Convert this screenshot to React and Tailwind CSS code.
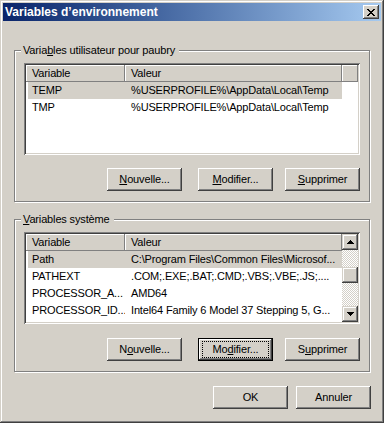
import React from "react";

const FONT = "font-['Liberation_Sans',Arial,sans-serif]";

function Btn({ children, className = "", focused = false }) {
  if (focused) {
    return (
      <div
        className={`flex h-[23px] w-[75px] shrink-0 border border-black bg-[#d4d0c8] px-[3px] py-[2px] shadow-[inset_-1px_-1px_#404040,inset_1px_1px_#fff,inset_-2px_-2px_#808080] ${className}`}
      >
        <div className="flex flex-1 items-center justify-center border border-dotted border-black leading-[13px]">
          {children}
        </div>
      </div>
    );
  }
  return (
    <div
      className={`flex h-[23px] w-[75px] shrink-0 items-center justify-center bg-[#d4d0c8] leading-[13px] shadow-[inset_-1px_-1px_#404040,inset_1px_1px_#fff,inset_-2px_-2px_#808080,inset_2px_2px_#d4d0c8] ${className}`}
    >
      {children}
    </div>
  );
}

function Arrow({ down = false }) {
  return (
    <svg
      width="7"
      height="4"
      viewBox="0 0 7 4"
      shapeRendering="crispEdges"
      className={down ? "rotate-180" : ""}
    >
      <path d="M3 0h1v1H3zM2 1h3v1H2zM1 2h5v1H1zM0 3h7v1H0z" fill="#000" />
    </svg>
  );
}

function ScrollBtn({ down = false }) {
  return (
    <div className="flex h-[16px] w-[16px] shrink-0 items-center justify-center bg-[#d4d0c8] shadow-[inset_-1px_-1px_#404040,inset_1px_1px_#d4d0c8,inset_-2px_-2px_#808080,inset_2px_2px_#fff]">
      <Arrow down={down} />
    </div>
  );
}

function Scrollbar() {
  return (
    <div className="flex w-[16px] shrink-0 flex-col">
      <ScrollBtn />
      <div className="flex-1 bg-[conic-gradient(#fff_25%,#d4d0c8_0_50%,#fff_0_75%,#d4d0c8_0)] bg-[length:2px_2px]">
        <div className="mt-[17px] h-[16px] w-[16px] bg-[#d4d0c8] shadow-[inset_-1px_-1px_#404040,inset_1px_1px_#d4d0c8,inset_-2px_-2px_#808080,inset_2px_2px_#fff]" />
      </div>
      <ScrollBtn down />
    </div>
  );
}

const HEAD =
  "flex h-full shrink-0 items-center bg-[#d4d0c8] shadow-[inset_-1px_-1px_#808080,inset_1px_1px_#fff]";

function ListView({ rows, scroll = false }) {
  return (
    <div className="ml-[9px] mt-[6px] flex h-[92px] w-[336px] bg-white p-[2px] shadow-[inset_1px_1px_#808080,inset_-1px_-1px_#fff,inset_2px_2px_#404040,inset_-2px_-2px_#d4d0c8]">
      <div className="flex min-w-0 flex-1 flex-col overflow-hidden">
        <div className="flex h-[17px] shrink-0">
          <div className={`${HEAD} w-[99px] pl-[6px]`}>Variable</div>
          <div className={`${HEAD} w-[217px] pl-[6px]`}>Valeur</div>
          <div className={`${HEAD} flex-1`} />
        </div>
        {rows.map((r) => (
          <div key={r.name} className="flex h-[17px] shrink-0">
            <div
              className={`ml-[2px] flex h-full leading-[17px] ${
                r.sel ? "bg-[#d4d0c8]" : ""
              }`}
            >
              <div className="w-[97px] shrink-0 overflow-hidden whitespace-nowrap pl-[4px]">
                {r.name}
              </div>
              <div className="w-[217px] shrink-0 overflow-hidden whitespace-nowrap pl-[6px]">
                {r.value}
              </div>
            </div>
          </div>
        ))}
      </div>
      {scroll && <Scrollbar />}
    </div>
  );
}

function GroupBox({ label, className = "", children }) {
  return (
    <div
      className={`flex w-[356px] flex-col border border-[#808080] pb-[10px] shadow-[inset_1px_1px_#fff,1px_1px_#fff] ${className}`}
    >
      <div className="-mt-[7px] ml-[6px] h-[13px] w-fit bg-[#d4d0c8] pl-[2px] pr-[4px] leading-[13px]">
        {label}
      </div>
      {children}
    </div>
  );
}

export default function App() {
  const userRows = [
    { name: "TEMP", value: "%USERPROFILE%\\AppData\\Local\\Temp", sel: true },
    { name: "TMP", value: "%USERPROFILE%\\AppData\\Local\\Temp" },
  ];
  const sysRows = [
    {
      name: "Path",
      value: "C:\\Program Files\\Common Files\\Microsof...",
      sel: true,
    },
    { name: "PATHEXT", value: ".COM;.EXE;.BAT;.CMD;.VBS;.VBE;.JS;...." },
    { name: "PROCESSOR_A...", value: "AMD64" },
    {
      name: "PROCESSOR_ID...",
      value: "Intel64 Family 6 Model 37 Stepping 5, G...",
    },
  ];

  return (
    <div
      className={`${FONT} h-[423px] w-[384px] overflow-hidden bg-[#d4d0c8] p-[3px] text-[11px] tracking-[-0.15px] text-black shadow-[inset_-1px_-1px_#404040,inset_1px_1px_#d4d0c8,inset_-2px_-2px_#808080,inset_2px_2px_#fff]`}
    >
      {/* Title bar */}
      <div className="flex h-[18px] items-center bg-gradient-to-r from-[#0a246a] to-[#a6caf0] pl-[2px] pr-[2px]">
        <div className="flex-1 text-[12px] font-bold tracking-normal text-white">
          Variables d’environnement
        </div>
        <div className="flex h-[14px] w-[16px] items-center justify-center bg-[#d4d0c8] shadow-[inset_-1px_-1px_#404040,inset_1px_1px_#fff,inset_-2px_-2px_#808080,inset_2px_2px_#d4d0c8]">
          <svg width="8" height="7" viewBox="0 0 8 7" shapeRendering="crispEdges">
            <path
              d="M0 0h2v1H0zM6 0h2v1H6zM1 1h2v1H1zM5 1h2v1H5zM2 2h4v1H2zM3 3h2v1H3zM2 4h4v1H2zM1 5h2v1H1zM5 5h2v1H5zM0 6h2v1H0zM6 6h2v1H6z"
              fill="#000"
            />
          </svg>
        </div>
      </div>

      <div className="flex flex-col pl-[11px]">
        <GroupBox
          className="mt-[29px]"
          label={
            <>
              Varia<u>b</u>les utilisateur pour paubry
            </>
          }
        >
          <ListView rows={userRows} />
          <div className="mt-[13px] flex justify-end pr-[9px]">
            <Btn>
              <u>N</u>ouvelle...
            </Btn>
            <Btn className="ml-[16px]">
              <u>M</u>odifier...
            </Btn>
            <Btn className="ml-[12px]">
              <u>S</u>upprimer
            </Btn>
          </div>
        </GroupBox>

        <GroupBox
          className="mt-[17px]"
          label={
            <>
              <u>V</u>ariables système
            </>
          }
        >
          <ListView rows={sysRows} scroll />
          <div className="mt-[14px] flex justify-end pr-[9px]">
            <Btn>
              N<u>o</u>uvelle...
            </Btn>
            <Btn className="ml-[16px]" focused>
              Mo<u>d</u>ifier...
            </Btn>
            <Btn className="ml-[12px]">
              S<u>u</u>pprimer
            </Btn>
          </div>
        </GroupBox>

        <div className="mt-[14px] flex justify-end gap-[8px] pr-[10px]">
          <Btn>OK</Btn>
          <Btn>Annuler</Btn>
        </div>
      </div>
    </div>
  );
}
